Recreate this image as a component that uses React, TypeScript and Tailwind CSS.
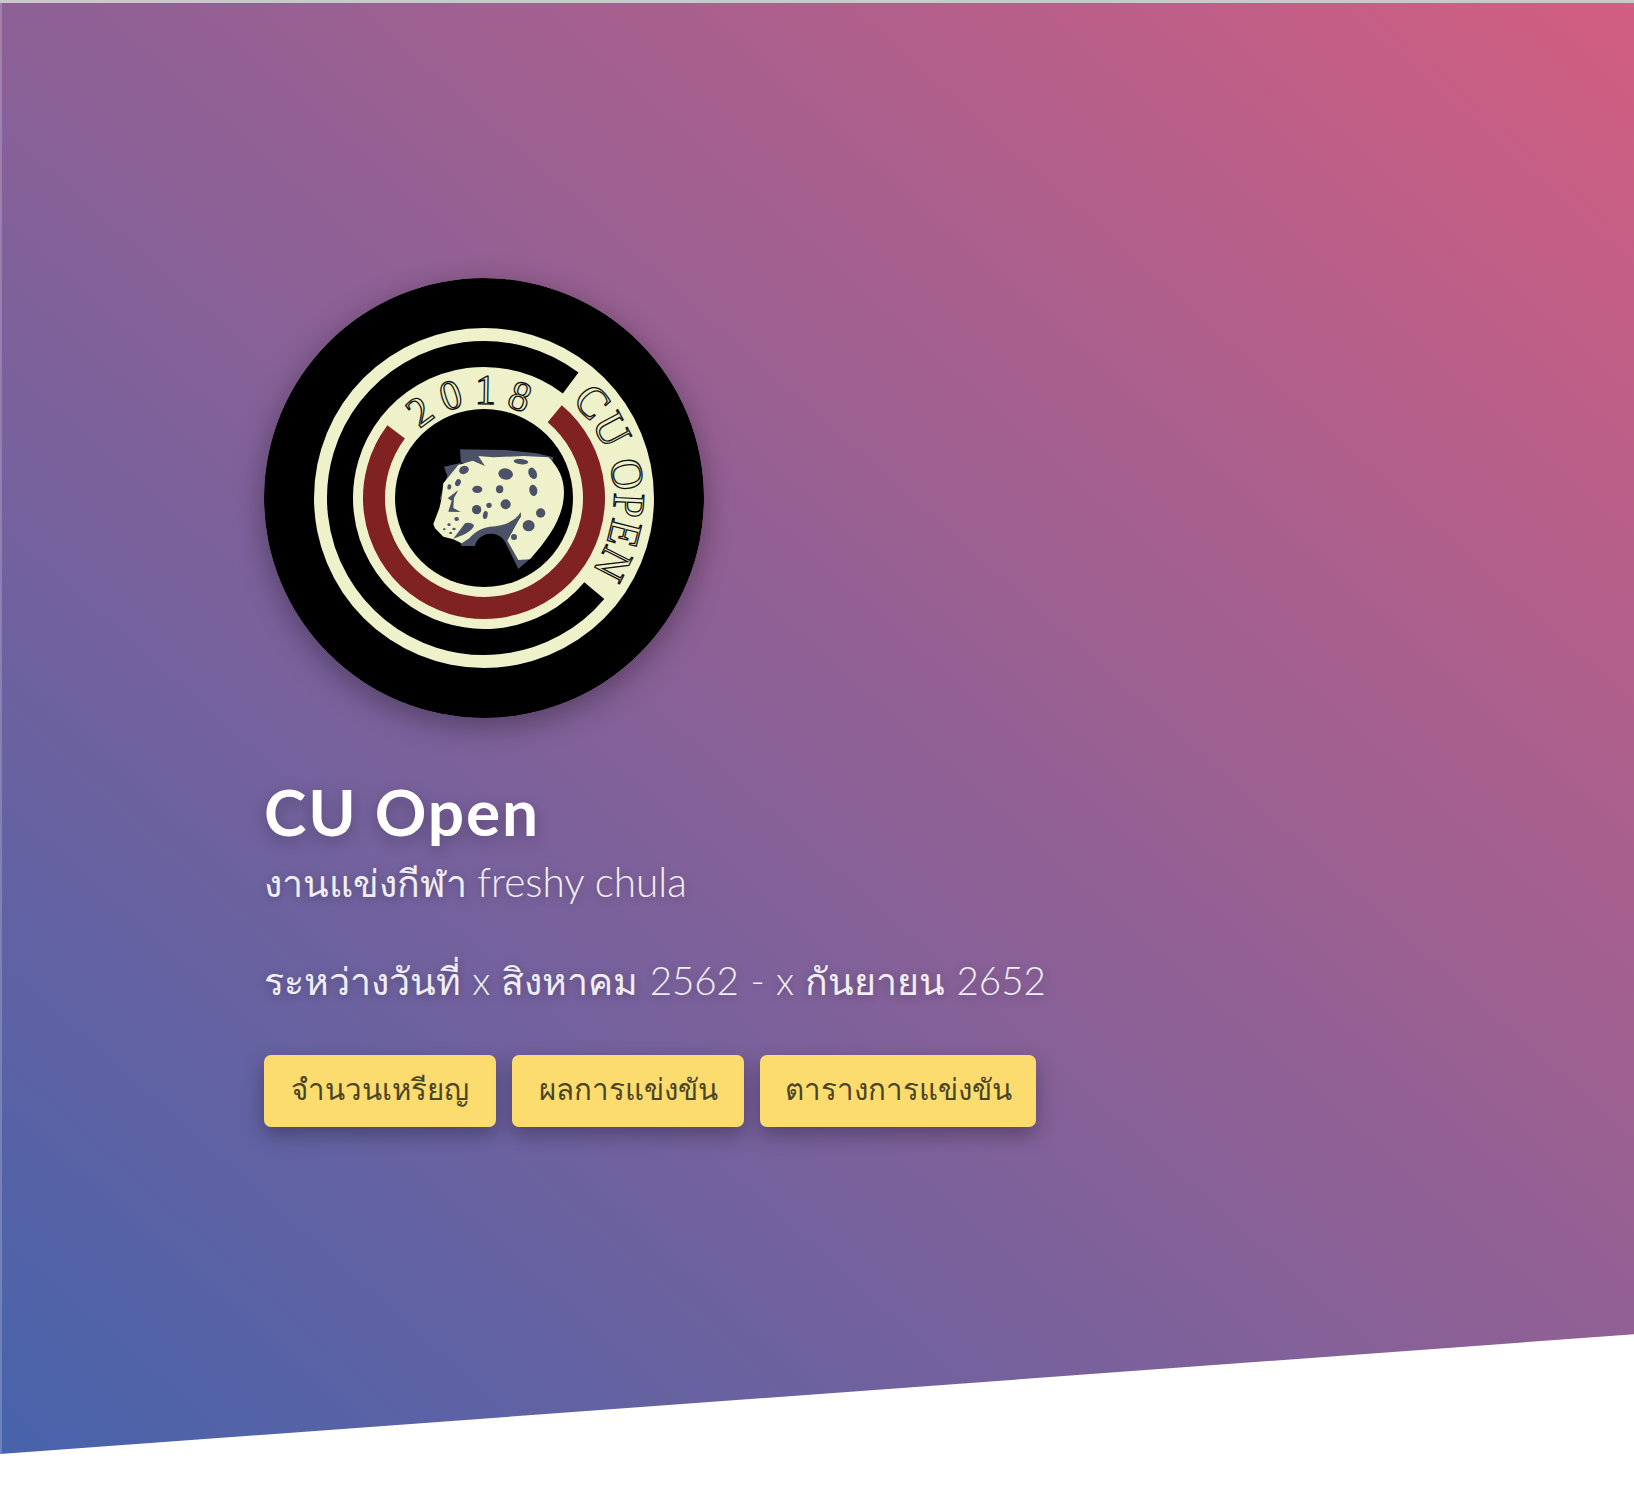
const font = { fontFamily: 'Lato, "Noto Sans", "DejaVu Sans", sans-serif' }

// point on a circle centred in the 440 box, angle in degrees clockwise from 3 o'clock
function pt(r: number, deg: number) {
  const a = (deg * Math.PI) / 180
  return `${(220 + r * Math.cos(a)).toFixed(2)} ${(220 + r * Math.sin(a)).toFixed(2)}`
}

function arc(r: number, from: number, to: number) {
  const large = to - from > 180 ? 1 : 0
  return `M ${pt(r, from)} A ${r} ${r} 0 ${large} 1 ${pt(r, to)}`
}

const spots: [number, number, number, number, number][] = [
  [222, 150, 15, 12, -25],
  [347, 162, 22, 17, 10],
  [393, 125, 22, 8, 5],
  [428, 160, 12, 18, -25],
  [262, 208, 15, 11, 0],
  [329, 208, 11, 12, 0],
  [430, 211, 12, 17, -10],
  [204, 188, 8, 11, 25],
  [178, 201, 6, 8, 10],
  [347, 253, 15, 15, 0],
  [260, 269, 14, 14, 0],
  [297, 256, 8, 8, 0],
  [286, 285, 7, 12, 10],
  [452, 279, 14, 14, 0],
  [416, 317, 18, 17, 0],
  [372, 351, 9, 9, 0],
  [200, 297, 7, 6, 0],
  [177, 314, 5, 4, 0],
  [192, 327, 5, 4, 0],
  [163, 328, 4, 3, 0],
  [182, 339, 5, 3, 0],
]

function Logo() {
  const cream = '#eef1ca'
  const slate = '#4b5166'
  return (
    <svg viewBox="0 0 440 440" className="h-[440px] w-[440px] rounded-full shadow-[0_8px_30px_rgba(0,0,0,0.35)]">
      <circle cx="220" cy="220" r="220" fill="#000" />
      <circle cx="220" cy="220" r="170" fill={cream} />
      <path d={arc(144, 40, 307)} fill="none" stroke="#000" strokeWidth="26" />
      <path d={arc(110, -50, 217)} fill="none" stroke="#802222" strokeWidth="22" />
      <circle cx="220" cy="220" r="89" fill="#000" />

      <defs>
        <path id="ringOuter" d={arc(130, -48, 38)} />
        <path id="ringInner" d={arc(94, -133, -63)} />
      </defs>
      <g fill={cream} stroke="#111" strokeWidth="1.3" fontFamily='"Liberation Serif", serif'>
        <text fontSize="45">
          <textPath href="#ringOuter" textLength="186" lengthAdjust="spacingAndGlyphs">CU OPEN</textPath>
        </text>
        <text fontSize="42">
          <textPath href="#ringInner" textLength="113" lengthAdjust="spacing">2018</textPath>
        </text>
      </g>

      {/* jaguar head, drawn in the coordinates of a 3x crop */}
      <g transform="translate(126 142) scale(0.3333)">
        <path
          fill={slate}
          d="M210 88 L350 90 L440 100 L490 112 L480 150 L300 150 L215 128 L162 140 L172 168 L150 235 L215 378 L255 378 C262 340 320 325 345 365 L385 447 L425 412 L380 365 L392 275 L300 320 L225 330 Z"
        />
        <path
          fill={cream}
          d="M205 135 L248 122 L285 138 L265 108 L310 112 L400 108 L475 112 C505 140 522 175 522 215 C522 290 480 350 420 418 L385 420 L352 362 L392 290 L392 277 C375 305 340 318 300 320 C270 325 250 340 238 355 L215 370 L190 358 L160 350 L135 325 L130 312 L148 265 L155 235 L160 190 Z"
        />
        <path fill={slate} d="M190 356 L225 310 C235 306 250 310 252 318 C245 335 215 348 190 356 Z" />
        <path fill={slate} d="M205 210 L173 235 L185 242 L175 275 L212 276 L190 264 L192 234 Z" />
        {spots.map(([cx, cy, rx, ry, rot]) => (
          <ellipse key={`${cx}-${cy}`} cx={cx} cy={cy} rx={rx} ry={ry} fill={slate} transform={`rotate(${rot} ${cx} ${cy})`} />
        ))}
      </g>
    </svg>
  )
}

export default function App() {
  return (
    <div className="h-[1500px] bg-white" style={font}>
      <div className="h-[3px] bg-[#c9c9c9]" />
      <section className="h-[1451px] border-l-2 border-white/20 bg-linear-to-tr/srgb bg-origin-border from-[#4763ab] to-[#d25e81] pl-[262px] pt-[275px] [clip-path:polygon(0_0,100%_0,100%_91.75%,0_100%)]">
        <Logo />
        <h1 className="mt-[54px] text-[64px] font-bold leading-[80px] tracking-[1.8px] text-white [text-shadow:0_5px_16px_rgba(0,0,0,0.25)]">CU Open</h1>
        <p className="mt-[2px] text-[37.5px] font-light leading-[56px] text-white/90 [text-shadow:0_2px_10px_rgba(0,0,0,0.25)]">
          งานแข่งกีฬา <span className="text-[40.5px]">freshy chula</span>
        </p>
        <p className="mt-[41px] text-[37.5px] font-light leading-[56px] text-white/90 [word-spacing:1px] [text-shadow:0_2px_10px_rgba(0,0,0,0.25)]">
          ระหว่างวันที่ <span className="text-[38.5px]">x</span> สิงหาคม <span className="text-[38.5px]">2562 - x</span> กันยายน <span className="text-[38.5px]">2652</span>
        </p>
        <div className="mt-[46px] flex gap-4">
          {[
            { label: 'จำนวนเหรียญ', w: 'w-[232px]' },
            { label: 'ผลการแข่งขัน', w: 'w-[232px]' },
            { label: 'ตารางการแข่งขัน', w: 'w-[276px]' },
          ].map((b) => (
            <a key={b.label} href="#" className={`${b.w} flex h-[72px] items-center justify-center rounded-[7px] bg-[#fcdc6e] pb-[4px] text-[29.5px] text-[#4a4526] shadow-[0_8px_20px_rgba(0,0,0,0.3)]`}>
              {b.label}
            </a>
          ))}
        </div>
      </section>
    </div>
  )
}
